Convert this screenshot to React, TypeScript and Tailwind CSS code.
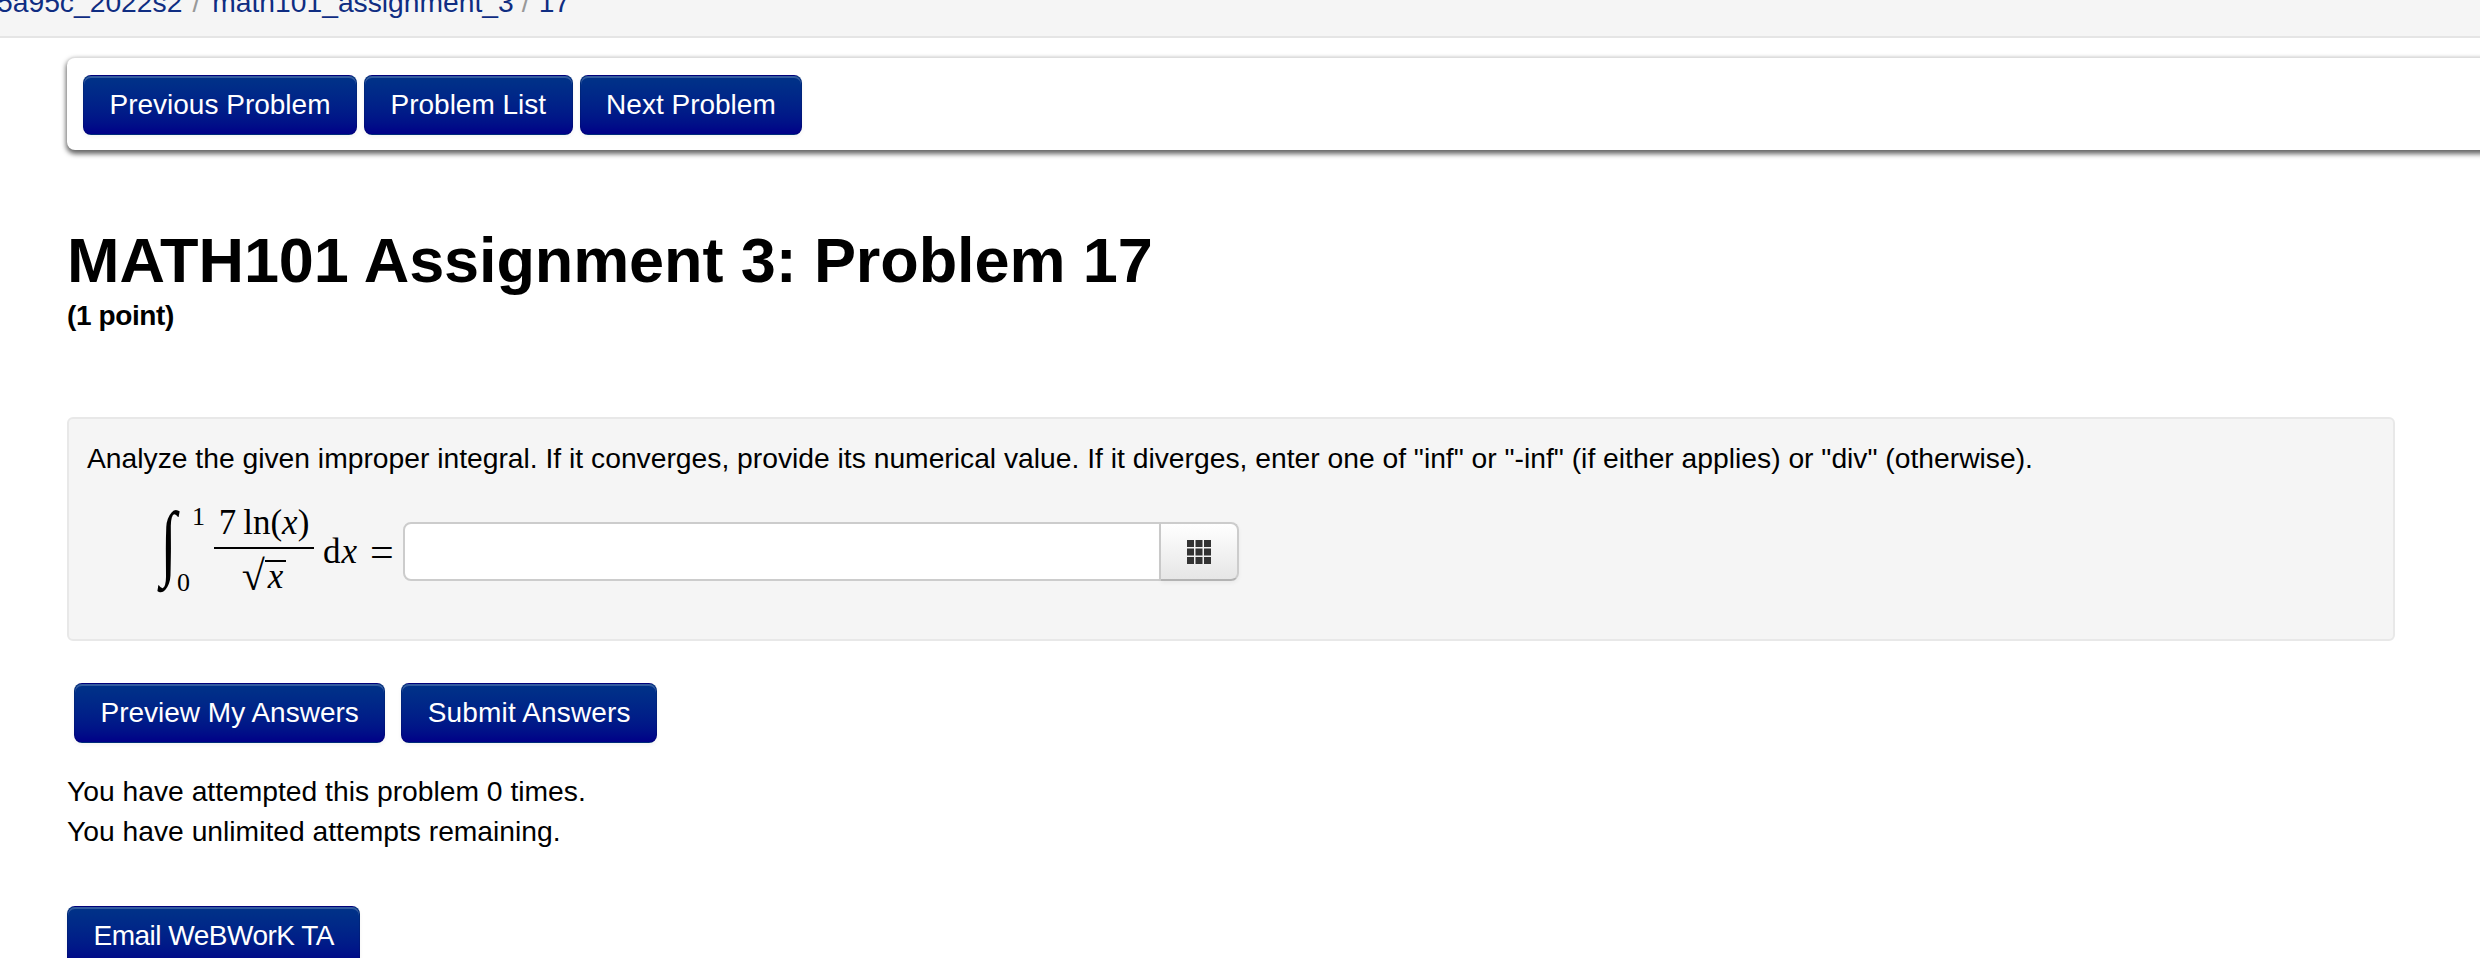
import React from 'react';

const Btn: React.FC<{ children: React.ReactNode; className?: string }> = ({ children, className = '' }) => (
  <button
    className={`h-[60px] px-[25.5px] shrink-0 rounded-lg border border-black/10 bg-gradient-to-b from-[#003388] to-[#000088] text-[28px] leading-[40px] text-white shadow-[inset_0_2px_0_rgba(255,255,255,0.2),0_2px_4px_rgba(0,0,0,0.05)] ${className}`}
  >
    {children}
  </button>
);

const serif = "font-['Liberation_Serif','Times_New_Roman',serif]";

const App: React.FC = () => {
  return (
    <div className="h-[958px] w-full overflow-hidden bg-white font-['Liberation_Sans',Arial,sans-serif] text-[28.25px] leading-[40px] text-black">
      {/* breadcrumb, scrolled off the top */}
      <div className="h-[38px] bg-[#f5f5f5] border-b-2 border-[#e5e5e5] overflow-hidden">
        <div className="-mt-[18px] -ml-[3px] whitespace-nowrap text-[#0f2d82]">
          <span>5a95c_2022s2</span>
          <span className="text-[#999999] pl-[10px] pr-[12px]">/</span>
          <span>math101_assignment_3</span>
          <span className="text-[#999999] pl-[8px] pr-[9px]">/</span>
          <span>17</span>
        </div>
      </div>

      <div className="pl-[67px]">
        {/* problem nav */}
        <div className="mt-[19px] h-[93px] -mr-[20px] flex items-start gap-[7px] pl-[16px] pt-[17px] bg-white rounded-l-lg border-t border-[#dddddd] shadow-[0_3px_5px_1px_rgba(0,0,0,0.6)]">
          <Btn>Previous Problem</Btn>
          <Btn>Problem List</Btn>
          <Btn>Next Problem</Btn>
        </div>

        <h1 className="mt-[73px] text-[63px] leading-[74px] font-bold tracking-[-0.1px]">MATH101 Assignment 3: Problem 17</h1>
        <div className="font-bold text-[28px] leading-[38px] tracking-[-0.4px]">(1 point)</div>

        {/* problem text */}
        <div className="mt-[82px] w-[2328px] h-[224px] bg-[#f5f5f5] border-2 border-[#e8e8e8] rounded-md pl-[18px] pt-[19px]">
          <p>
            Analyze the given improper integral. If it converges, provide its numerical value. If it diverges, enter one of "inf" or "-inf" (if either applies) or "div" (otherwise).
          </p>
          <div className="mt-[44px] flex items-center h-[59px]">
            <div className={`flex items-center h-[59px] ml-[72px] ${serif} text-[35px] leading-none`}>
              <div className="flex items-center w-[55px] h-[80px]">
                <span className="w-[24px] text-[84px] leading-none scale-x-[0.7] -ml-[2px] -mt-[20px]">∫</span>
                <div className="flex flex-col justify-between h-[92px] -mt-[4px] text-[26px] leading-[26px]">
                  <span className="ml-[11px]">1</span>
                  <span className="-ml-[4px]">0</span>
                </div>
              </div>
              <div className="flex flex-col items-center w-[100px] -mt-[5px]">
                <div className="h-[48px] flex items-center whitespace-nowrap">
                  7&thinsp;ln(<i>x</i>)
                </div>
                <div className="w-full h-[2px] bg-black" />
                <div className="h-[48px] flex items-center mt-[3px]">
                  <span className="text-[42px]">√</span>
                  <i className="border-t-2 border-black leading-[30px] px-[3px]">x</i>
                </div>
              </div>
              <span className="ml-[9px] w-[47px] tracking-[1px]">d<i>x</i></span>
              <span className="w-[33px] text-[42px]">=</span>
            </div>
            <div className="flex h-[59px]">
              <input
                className="w-[758px] h-full bg-white border-2 border-[#cccccc] rounded-l-lg outline-none"
                aria-label="answer"
              />
              <button className="w-[78px] h-full flex items-center justify-center border-2 border-l-0 border-[#cccccc] border-b-[#b3b3b3] rounded-r-lg bg-gradient-to-b from-white to-[#e6e6e6] shadow-[0_2px_4px_rgba(0,0,0,0.05)]">
                <svg width="24" height="24" viewBox="0 0 24 24" fill="#333333">
                  <rect x="0" y="0" width="7" height="7" />
                  <rect x="8.5" y="0" width="7" height="7" />
                  <rect x="17" y="0" width="7" height="7" />
                  <rect x="0" y="8.5" width="7" height="7" />
                  <rect x="8.5" y="8.5" width="7" height="7" />
                  <rect x="17" y="8.5" width="7" height="7" />
                  <rect x="0" y="17" width="7" height="7" />
                  <rect x="8.5" y="17" width="7" height="7" />
                  <rect x="17" y="17" width="7" height="7" />
                </svg>
              </button>
            </div>
          </div>
        </div>

        <div className="mt-[42px] ml-[7px] flex gap-[16px]">
          <Btn>Preview My Answers</Btn>
          <Btn className="tracking-[0.15px]">Submit Answers</Btn>
        </div>

        <div className="mt-[28px]">
          <div>You have attempted this problem 0 times.</div>
          <div>You have unlimited attempts remaining.</div>
        </div>

        <Btn className="mt-[55px] tracking-[-0.5px]">Email WeBWorK TA</Btn>
      </div>
    </div>
  );
};

export default App;
